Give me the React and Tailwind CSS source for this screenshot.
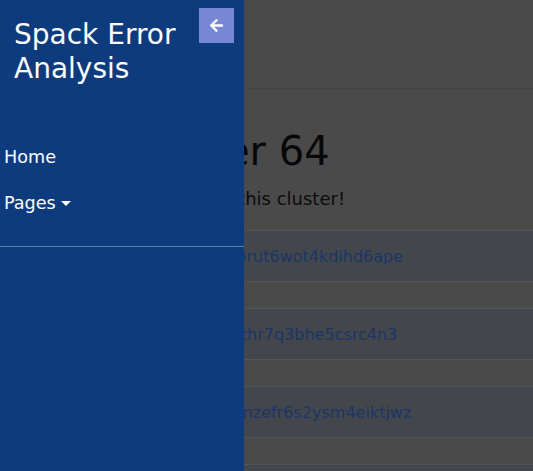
import React from "react";
import { FaArrowLeft } from "react-icons/fa";

const items = [
  { hash: "7hn2qxw3lzc5obprut6wot4kdihd6ape", pl: "pl-[101px]" },
  { hash: "a2kvxo5lgmu3ynthr7q3bhe5csrc4n3", pl: "pl-[103px]" },
  { hash: "ul4o3xwqgbdcnzefr6s2ysm4eiktjwz", pl: "pl-[126px]" },
  { hash: "q5b7ylx3fmkr2wo6vdeg4ph3tnjsaic", pl: "pl-[101px]" },
];

export default function App() {
  return (
    <div
      className="relative h-[471px] w-full overflow-hidden bg-[#4a4a4a]"
      style={{ fontFamily: '"DejaVu Sans", sans-serif' }}
    >
      {/* dimmed page behind */}
      <div className="flex flex-col">
        <div className="h-[89px] border-b border-[#444444]" />
        <h1 className="mt-[38px] pl-[124px] text-[40px] leading-[48px] font-normal text-[#080808] whitespace-nowrap">
          Cluster 64
        </h1>
        <p className="mt-[10px] pl-[157px] text-[18px] leading-[27px] text-[#0c0c0c] whitespace-nowrap">
          Errors in this cluster!
        </p>
        <div className="mt-[18px] flex flex-col gap-[26px]">
          {items.map((it) => (
            <div
              key={it.hash}
              className={`flex h-[52px] items-center border-y border-[#515458] bg-[#43474c] pt-[1px] ${it.pl}`}
            >
              <span className="text-[16px] leading-[24px] text-[#1b3567] whitespace-nowrap">
                {it.hash}
              </span>
            </div>
          ))}
        </div>
      </div>

      {/* sidebar */}
      <aside className="absolute left-0 top-0 z-10 flex h-full w-[244px] flex-col bg-[#0e3a7e] text-white">
        <div className="flex items-start pl-[14px] pt-[8px]">
          <div className="mt-[10px] text-[28px] leading-[33.6px]">Spack Error Analysis</div>
          <button className="ml-auto mr-[10px] flex h-[35px] w-[35px] shrink-0 items-center justify-center bg-[#7886d6] text-white">
            <FaArrowLeft size={15} />
          </button>
        </div>
        <nav className="mt-[49px] flex flex-col">
          <div className="flex h-[46px] items-center pl-[4px] text-[17.6px]">Home</div>
          <div className="flex h-[46px] items-center pl-[4px] text-[17.6px]">
            Pages
            <span className="ml-[5px] inline-block h-0 w-0 border-x-[5px] border-t-[5px] border-x-transparent border-t-white" />
          </div>
        </nav>
        <div className="mt-[20px] h-px bg-[#4a8898]" />
      </aside>
    </div>
  );
}
